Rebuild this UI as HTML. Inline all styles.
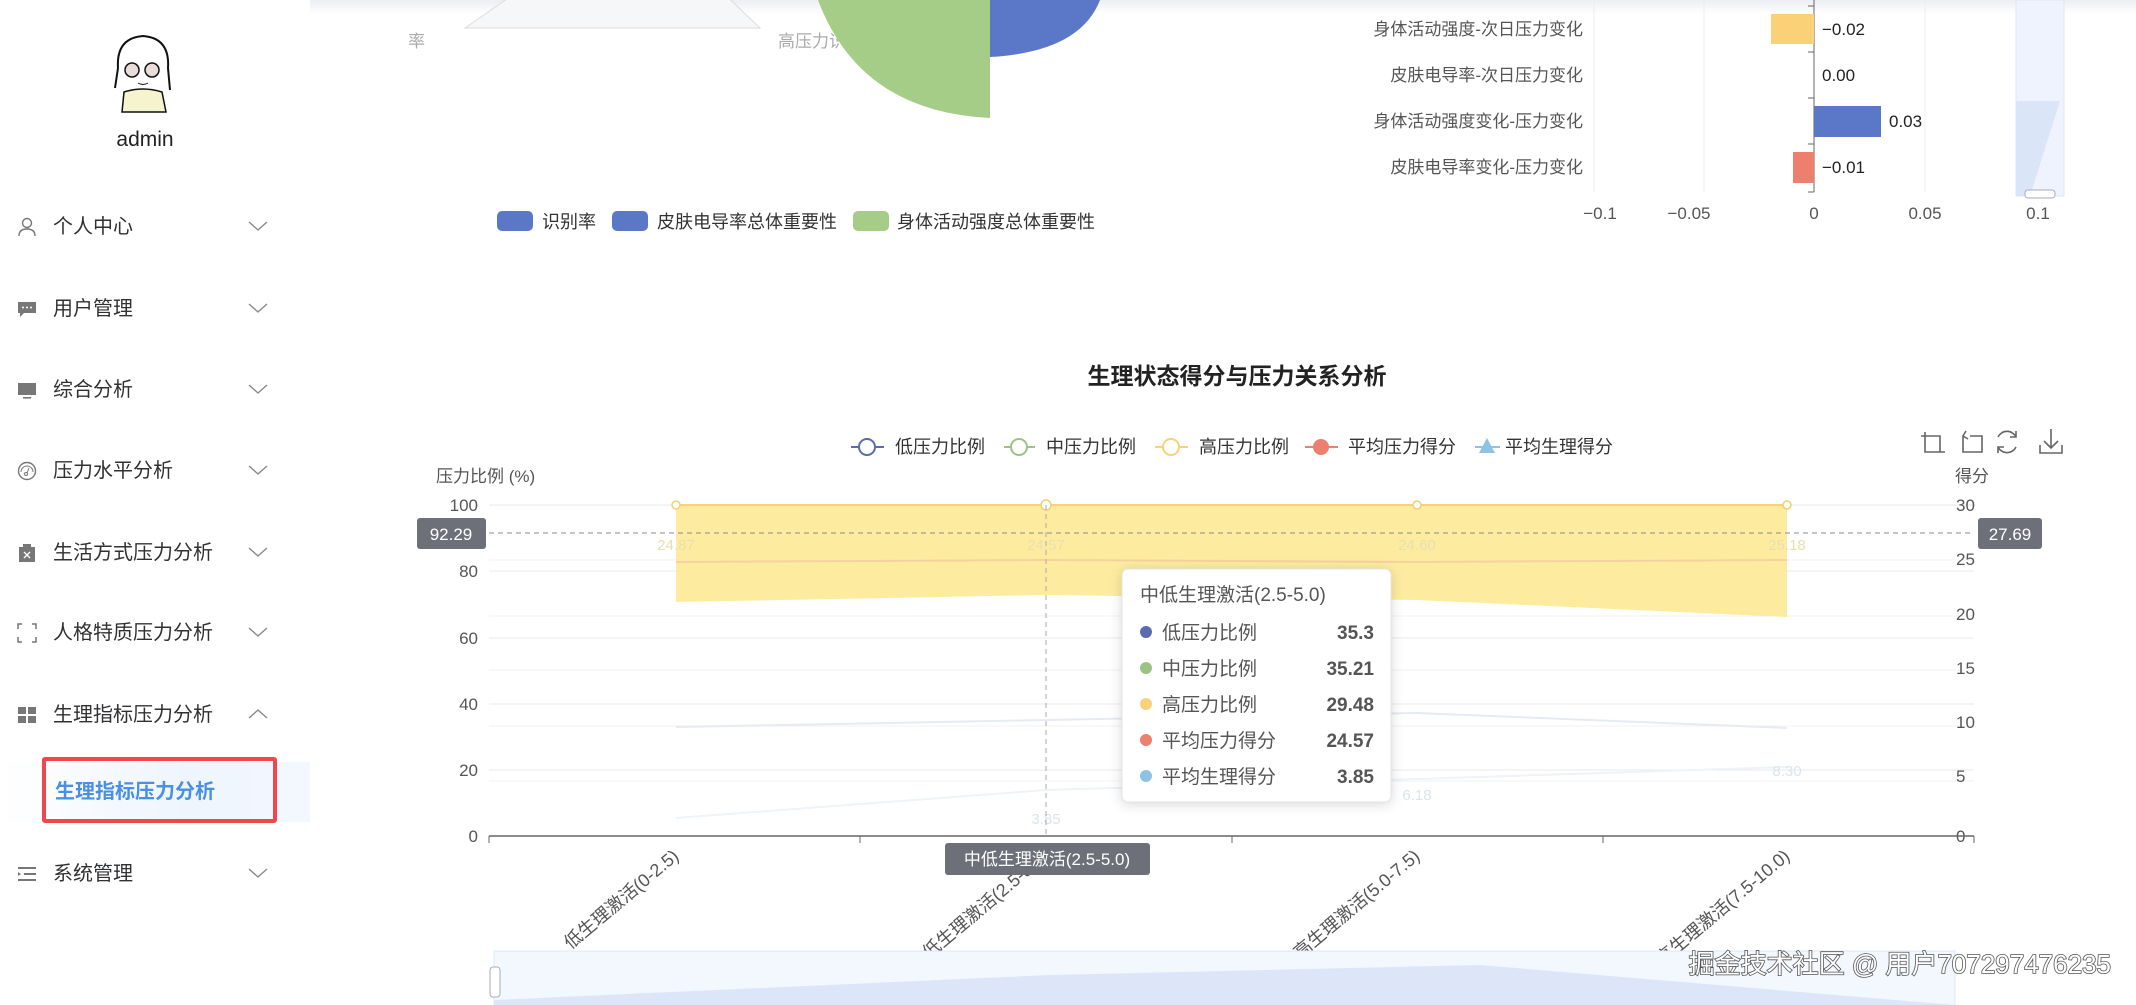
<!DOCTYPE html>
<html><head><meta charset="utf-8"><style>
*{margin:0;padding:0;box-sizing:border-box}
body{width:2136px;height:1005px;overflow:hidden;background:#fff;font-family:"Liberation Sans","Noto Sans CJK SC",sans-serif;position:relative}
.side{position:absolute;left:0;top:0;width:310px;height:1005px;background:#fff}
.mi{position:absolute;left:0;width:310px;height:40px;font-size:20px;color:#303133;line-height:40px}
.mi .ic{position:absolute;left:17px;top:10px;width:20px;height:20px}
.mi .t{position:absolute;left:53px}
.mi .ch{position:absolute;left:248px;top:12px}
.top{position:absolute;left:310px;top:0;width:1826px;height:14px;background:linear-gradient(#eceef2,#fff)}
</style></head><body>
<div class="top"></div>
<div class="side">
  <svg style="position:absolute;left:100px;top:28px" width="86" height="86" viewBox="0 0 86 86">
    <circle cx="43" cy="43" r="42" fill="#fff"/>
    <path d="M18 40 Q16 10 43 8 Q70 10 68 40 L70 62 M18 40 L15 60" fill="none" stroke="#111" stroke-width="2"/>
    <circle cx="32" cy="42" r="7" fill="#e8ddd8" stroke="#111" stroke-width="1.5"/>
    <circle cx="52" cy="42" r="7" fill="#e8ddd8" stroke="#111" stroke-width="1.5"/>
    <path d="M24 64 Q43 58 62 64 L66 84 L22 84Z" fill="#f6f3cf" stroke="#111" stroke-width="1.5"/>
    <path d="M38 55 Q43 58 48 55" fill="none" stroke="#111"/>
  </svg>
  <div style="position:absolute;left:0;width:290px;top:128px;text-align:center;font-size:21px;color:#222">admin</div>

  <div class="mi" style="top:207px"><svg class="ic" viewBox="0 0 20 20"><circle cx="10" cy="6" r="4.5" fill="none" stroke="#777" stroke-width="1.4"/><path d="M2 19 Q2 12 10 12 Q18 12 18 19" fill="none" stroke="#777" stroke-width="1.4"/></svg><span class="t">个人中心</span><svg class="ch" width="20" height="14"><path d="M1 3 L10 11 L19 3" fill="none" stroke="#888" stroke-width="1.4"/></svg></div>
  <div class="mi" style="top:289px"><svg class="ic" viewBox="0 0 20 20"><path d="M1 3 H19 V14 H7 L3 18 V14 H1Z" fill="#777"/><circle cx="6" cy="8.5" r="1" fill="#fff"/><circle cx="10" cy="8.5" r="1" fill="#fff"/><circle cx="14" cy="8.5" r="1" fill="#fff"/></svg><span class="t">用户管理</span><svg class="ch" width="20" height="14"><path d="M1 3 L10 11 L19 3" fill="none" stroke="#888" stroke-width="1.4"/></svg></div>
  <div class="mi" style="top:370px"><svg class="ic" viewBox="0 0 20 20"><rect x="1" y="3" width="18" height="12" fill="#777"/><rect x="6" y="17" width="8" height="1.6" fill="#777"/></svg><span class="t">综合分析</span><svg class="ch" width="20" height="14"><path d="M1 3 L10 11 L19 3" fill="none" stroke="#888" stroke-width="1.4"/></svg></div>
  <div class="mi" style="top:451px"><svg class="ic" viewBox="0 0 20 20"><circle cx="10" cy="10" r="8.5" fill="none" stroke="#777" stroke-width="1.4"/><path d="M4 11 A6 6 0 0 1 16 11" fill="none" stroke="#777"/><circle cx="9" cy="13" r="1.5" fill="none" stroke="#777"/><path d="M10 12 L12 7" stroke="#777"/></svg><span class="t">压力水平分析</span><svg class="ch" width="20" height="14"><path d="M1 3 L10 11 L19 3" fill="none" stroke="#888" stroke-width="1.4"/></svg></div>
  <div class="mi" style="top:533px"><svg class="ic" viewBox="0 0 20 20"><rect x="2" y="4" width="16" height="15" fill="#777"/><rect x="6" y="1" width="8" height="4" fill="#777"/><path d="M7 9 L13 15 M13 9 L7 15" stroke="#fff" stroke-width="1.4"/></svg><span class="t">生活方式压力分析</span><svg class="ch" width="20" height="14"><path d="M1 3 L10 11 L19 3" fill="none" stroke="#888" stroke-width="1.4"/></svg></div>
  <div class="mi" style="top:613px"><svg class="ic" viewBox="0 0 20 20"><path d="M1 6 V1 H5 M15 1 H19 V6 M19 14 V19 H15 M5 19 H1 V14" fill="none" stroke="#777" stroke-width="1.5"/></svg><span class="t">人格特质压力分析</span><svg class="ch" width="20" height="14"><path d="M1 3 L10 11 L19 3" fill="none" stroke="#888" stroke-width="1.4"/></svg></div>
  <div class="mi" style="top:695px"><svg class="ic" viewBox="0 0 20 20"><rect x="1" y="2" width="8" height="7" fill="#777"/><rect x="11" y="2" width="8" height="7" fill="#777"/><rect x="1" y="11" width="8" height="7" fill="#777"/><rect x="11" y="11" width="8" height="7" fill="#777"/></svg><span class="t">生理指标压力分析</span><svg class="ch" width="20" height="14"><path d="M1 11 L10 3 L19 11" fill="none" stroke="#888" stroke-width="1.4"/></svg></div>
  <div style="position:absolute;left:0;top:762px;width:310px;height:60px;background:linear-gradient(90deg,#fff,#eef5fd 60%,#f3f8fe)"></div>
  <div style="position:absolute;left:42px;top:757px;width:235px;height:66px;border:4px solid #f0474e;border-radius:3px"></div>
  <div style="position:absolute;left:55px;top:775px;font-size:20px;font-weight:bold;color:#4a90e2">生理指标压力分析</div>
  <div class="mi" style="top:854px"><svg class="ic" viewBox="0 0 20 20"><path d="M1 4 H19 M7 10 H19 M1 16 H19" stroke="#777" stroke-width="2"/><path d="M1 8 L4 10 L1 12Z" fill="#777"/></svg><span class="t">系统管理</span><svg class="ch" width="20" height="14"><path d="M1 3 L10 11 L19 3" fill="none" stroke="#888" stroke-width="1.4"/></svg></div>
</div>

<svg style="position:absolute;left:0;top:0" width="2136" height="1005" font-family="Liberation Sans, Noto Sans CJK SC, sans-serif">
  <path d="M520 -10 L465 28 L760 28 L720 -10" fill="#f6f7f9" stroke="#ddd"/>
  <text x="408" y="47" font-size="17" fill="#aaa">率</text>
  <text x="778" y="47" font-size="17" fill="#aaa">高压力识</text>
  <path d="M990 0 L990 118 Q860 112 818 0Z" fill="#a5cd87"/>
  <path d="M990 0 L990 57 Q1080 52 1100 0Z" fill="#5b78c8"/>
  <rect x="497" y="211" width="36" height="20" rx="5" fill="#5b78c8"/><text x="542" y="228" font-size="18" fill="#333">识别率</text>
  <rect x="612" y="211" width="36" height="20" rx="5" fill="#5b78c8"/><text x="657" y="228" font-size="18" fill="#333">皮肤电导率总体重要性</text>
  <rect x="853" y="211" width="36" height="20" rx="5" fill="#a5cd87"/><text x="897" y="228" font-size="18" fill="#333">身体活动强度总体重要性</text>

  <g stroke="#eee"><path d="M1594 0 V192 M1704 0 V192 M1925 0 V192 M2036 0 V192"/></g>
  <path d="M1814 0 V192" stroke="#666"/>
  <g stroke="#666"><path d="M1814 6 h-6 M1814 52 h-6 M1814 98 h-6 M1814 144 h-6 M1814 192 h-6"/></g>
  <g font-size="17" fill="#555" text-anchor="end">
    <text x="1583" y="35">身体活动强度-次日压力变化</text>
    <text x="1583" y="81">皮肤电导率-次日压力变化</text>
    <text x="1583" y="127">身体活动强度变化-压力变化</text>
    <text x="1583" y="173">皮肤电导率变化-压力变化</text>
  </g>
  <rect x="1771" y="14" width="43" height="30" fill="#fbd178"/>
  <rect x="1814" y="106" width="67" height="31" fill="#5b78c8"/>
  <rect x="1793" y="152" width="21" height="31" fill="#ec7f6e"/>
  <g font-size="17" fill="#222"><text x="1822" y="35">−0.02</text><text x="1822" y="81">0.00</text><text x="1889" y="127">0.03</text><text x="1822" y="173">−0.01</text></g>
  <g font-size="17" fill="#555" text-anchor="middle"><text x="1600" y="219">−0.1</text><text x="1689" y="219">−0.05</text><text x="1814" y="219">0</text><text x="1925" y="219">0.05</text><text x="2038" y="219">0.1</text></g>
  <rect x="2016" y="0" width="48" height="196" fill="#eef3fd" stroke="#dfe6f5"/>
  <path d="M2016 101 L2060 101 L2030 196 L2016 196Z" fill="#dbe5f8"/>
  <rect x="2025" y="190" width="30" height="8" rx="3" fill="#fff" stroke="#aab"/>

  <text x="1237" y="384" font-size="23" font-weight="bold" text-anchor="middle" fill="#222">生理状态得分与压力关系分析</text>
  <g font-size="18" fill="#333">
    <path d="M851 447 H884" stroke="#5b6bb0" stroke-width="2"/><circle cx="867" cy="447" r="8" fill="#fff" stroke="#5b6bb0" stroke-width="2"/><text x="895" y="453">低压力比例</text>
    <path d="M1004 447 H1035" stroke="#9cc285" stroke-width="2"/><circle cx="1019" cy="447" r="8" fill="#fff" stroke="#9cc285" stroke-width="2"/><text x="1046" y="453">中压力比例</text>
    <path d="M1155 447 H1188" stroke="#f8d27a" stroke-width="2"/><circle cx="1171" cy="447" r="8" fill="#fff" stroke="#f8d27a" stroke-width="2"/><text x="1199" y="453">高压力比例</text>
    <path d="M1305 447 H1338" stroke="#ec7f6e" stroke-width="2"/><circle cx="1321" cy="447" r="8" fill="#ec7f6e"/><text x="1348" y="453">平均压力得分</text>
    <path d="M1475 447 H1500" stroke="#8dc3e3" stroke-width="2"/><path d="M1487 438 L1495 453 L1479 453Z" fill="#8dc3e3"/><text x="1505" y="453">平均生理得分</text>
  </g>
  <g fill="none" stroke="#666" stroke-width="1.6">
    <path d="M1925 432 V452 H1945 M1921 436 H1940 V452"/>
    <path d="M1963 436 V452 H1982 V436 H1970 M1966 431 L1963 436 L1968 439"/>
    <path d="M2016 437 A10 10 0 0 0 1998 437 M1998 447 A10 10 0 0 0 2016 447 M2016 431 V437 H2010 M1998 453 V447 H2004"/>
    <path d="M2051 429 V447 M2044 441 L2051 448 L2058 441 M2040 445 V453 H2062 V445"/>
  </g>
  <text x="436" y="482" font-size="17" fill="#555">压力比例 (%)</text>
  <text x="1955" y="482" font-size="17" fill="#555">得分</text>
  <g stroke="#eaeaea"><path d="M489 505 H1974 M489 571 H1974 M489 638 H1974 M489 704 H1974 M489 770 H1974"/></g>
  <g stroke="#f2f2f2"><path d="M489 560 H1974 M489 616 H1974 M489 670 H1974 M489 726 H1974 M489 781 H1974"/></g>
  <path d="M676 505 L1046 505 L1417 505 L1787 505 L1787 617 L1417 600 L1046 595 L676 602Z" fill="#fde98f" opacity="0.85"/>
  <path d="M676 505 H1787" stroke="#f8d27a" stroke-width="2"/>
  <g fill="#fff" stroke="#f0d070" stroke-width="1.5"><circle cx="676" cy="505" r="4"/><circle cx="1046" cy="505" r="5"/><circle cx="1417" cy="505" r="4"/><circle cx="1787" cy="505" r="4"/></g>
  <path d="M676 562 L1046 560 L1417 562 L1787 560" stroke="#f3c0a0" stroke-width="2" fill="none" opacity="0.6"/>
  <path d="M676 727 L1046 720 L1417 713 L1787 728" stroke="#e6eaf3" stroke-width="2" fill="none"/>
  <path d="M676 818 L1046 790 L1417 779 L1787 767" stroke="#eef3f8" stroke-width="2" fill="none"/>
  <g font-size="15" fill="#e8dfb0" text-anchor="middle"><text x="676" y="550">24.87</text><text x="1046" y="550">24.57</text><text x="1417" y="550">24.60</text><text x="1787" y="550">25.18</text></g>
  <g font-size="15" fill="#dde3ea" text-anchor="middle"><text x="1046" y="824">3.85</text><text x="1417" y="800">6.18</text><text x="1787" y="776">8.30</text></g>
  <path d="M489 533 H1974" stroke="#888" stroke-dasharray="5,4"/>
  <path d="M1046 505 V836" stroke="#aaa" stroke-dasharray="5,4"/>
  <g font-size="17" fill="#555" text-anchor="end"><text x="478" y="511">100</text><text x="478" y="577">80</text><text x="478" y="644">60</text><text x="478" y="710">40</text><text x="478" y="776">20</text><text x="478" y="842">0</text></g>
  <g font-size="17" fill="#555"><text x="1956" y="511">30</text><text x="1956" y="565">25</text><text x="1956" y="620">20</text><text x="1956" y="674">15</text><text x="1956" y="728">10</text><text x="1956" y="782">5</text><text x="1956" y="842">0</text></g>
  <rect x="417" y="518" width="69" height="31" rx="3" fill="#6e7079"/><text x="451" y="540" font-size="17" fill="#fff" text-anchor="middle">92.29</text>
  <rect x="1978" y="518" width="64" height="31" rx="3" fill="#6e7079"/><text x="2010" y="540" font-size="17" fill="#fff" text-anchor="middle">27.69</text>
  <path d="M489 836 H1974" stroke="#666" stroke-width="1.5"/>
  <g stroke="#666"><path d="M489 836 v7 M860 836 v7 M1232 836 v7 M1603 836 v7 M1974 836 v7"/></g>
  <g font-size="18" fill="#555" text-anchor="end">
    <text transform="translate(680,858) rotate(-40)">低生理激活(0-2.5)</text>
    <text transform="translate(1050,858) rotate(-40)">中低生理激活(2.5-5.0)</text>
    <text transform="translate(1421,858) rotate(-40)">中高生理激活(5.0-7.5)</text>
    <text transform="translate(1791,858) rotate(-40)">高生理激活(7.5-10.0)</text>
  </g>
  <rect x="945" y="843" width="205" height="32" rx="3" fill="#6e7079"/><text x="1047" y="865" font-size="17" fill="#fff" text-anchor="middle">中低生理激活(2.5-5.0)</text>
  <rect x="1122" y="569" width="269" height="233" rx="6" fill="#fff" stroke="#e4e4e4" style="filter:drop-shadow(0 2px 6px rgba(0,0,0,.15))"/>
  <text x="1140" y="601" font-size="19" fill="#555">中低生理激活(2.5-5.0)</text>
  <g font-size="19" fill="#555">
    <circle cx="1146" cy="632" r="6" fill="#5b6bb0"/><text x="1162" y="639">低压力比例</text>
    <circle cx="1146" cy="668" r="6" fill="#9cc285"/><text x="1162" y="675">中压力比例</text>
    <circle cx="1146" cy="704" r="6" fill="#f8d27a"/><text x="1162" y="711">高压力比例</text>
    <circle cx="1146" cy="740" r="6" fill="#ec7f6e"/><text x="1162" y="747">平均压力得分</text>
    <circle cx="1146" cy="776" r="6" fill="#8dc3e3"/><text x="1162" y="783">平均生理得分</text>
  </g>
  <g font-size="19" font-weight="bold" fill="#555" text-anchor="end">
    <text x="1374" y="639">35.3</text><text x="1374" y="675">35.21</text><text x="1374" y="711">29.48</text><text x="1374" y="747">24.57</text><text x="1374" y="783">3.85</text>
  </g>
  <rect x="494" y="951" width="1461" height="60" fill="#f3f7fe" stroke="#dfe7f5"/>
  <path d="M494 1000 L1050 975 L1480 965 L1955 1005 L494 1005Z" fill="#dde6f8"/>
  <rect x="490" y="967" width="10" height="30" rx="3" fill="#fff" stroke="#aab"/>
  <text x="2111" y="973" font-size="26" fill="#fff" text-anchor="end" stroke="#555" stroke-width="1.6" style="paint-order:stroke">掘金技术社区 @ 用户707297476235</text>
</svg>
</body></html>
